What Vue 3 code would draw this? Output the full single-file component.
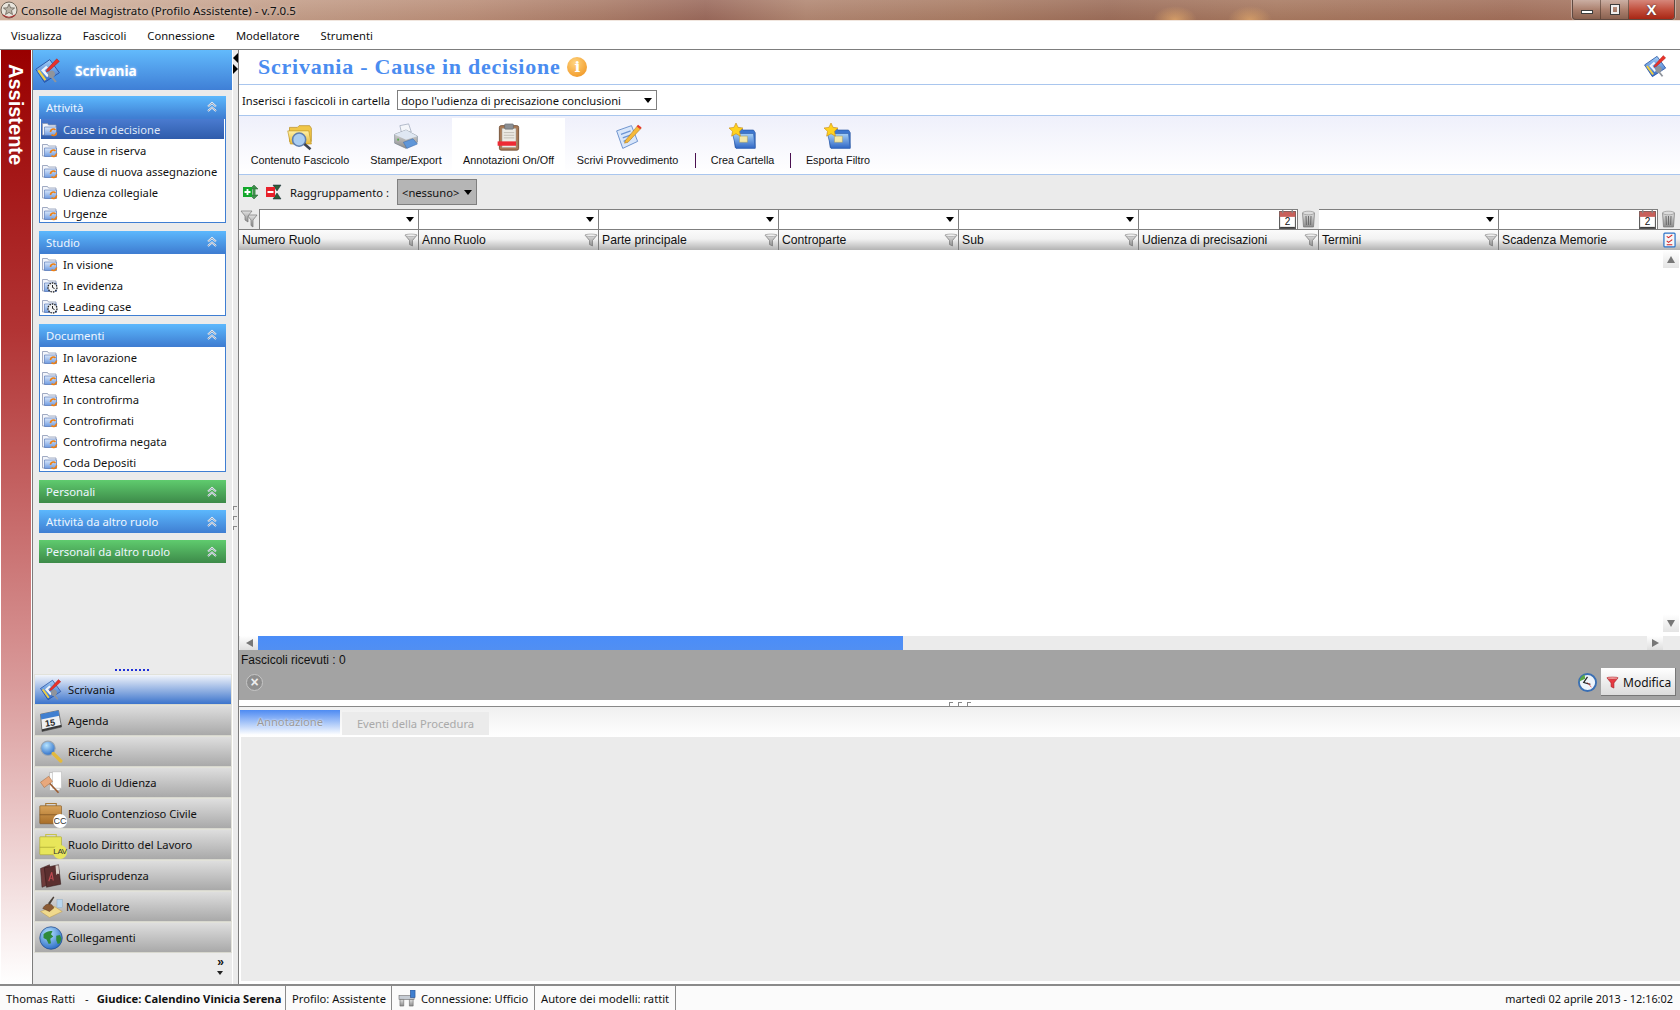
<template>
  <div class="app">
    <!-- icon sprite -->
    <svg class="sprite" width="0" height="0">
      <defs>
        <linearGradient id="g-blue" x1="0" y1="0" x2="0" y2="1"><stop offset="0" stop-color="#a5d0f7" /><stop offset="1" stop-color="#2f66c4" /></linearGradient>
        <linearGradient id="g-pale" x1="0" y1="0" x2="0" y2="1"><stop offset="0" stop-color="#dbe8fa" /><stop offset="1" stop-color="#6f9be0" /></linearGradient>
        <linearGradient id="g-yellow" x1="0" y1="0" x2="0" y2="1"><stop offset="0" stop-color="#fff2a8" /><stop offset="1" stop-color="#e8b838" /></linearGradient>
        <linearGradient id="g-brown" x1="0" y1="0" x2="0" y2="1"><stop offset="0" stop-color="#d9a35a" /><stop offset="1" stop-color="#a86e28" /></linearGradient>
        <linearGradient id="g-gray" x1="0" y1="0" x2="0" y2="1"><stop offset="0" stop-color="#e2e2e2" /><stop offset="1" stop-color="#8b8b8b" /></linearGradient>
        <radialGradient id="g-globe" cx="0.4" cy="0.3" r="0.8"><stop offset="0" stop-color="#b7e4ff" /><stop offset="1" stop-color="#1c5fc0" /></radialGradient>
      </defs>
      <symbol id="i-desk" viewBox="0 0 32 32">
        <path d="M2 14 18 3l11 15-17 11z" fill="url(#g-blue)" stroke="#254fa0" />
        <path d="M4 16 12 27l2-1.400L6 14.600z" fill="#f2d040" />
        <path d="M14 10 8 15l7 8 2-2-5-6 4-3z" fill="#eef4fc" />
        <path d="M16 20a4 4 0 1 1 6 3l4 5-2 1-4-5a4 4 0 0 1-4-4z" fill="#8f949c" />
        <path d="M15 14 26 2l3 3-12 11-3 1z" fill="#e8322a" stroke="#a01810" stroke-width=".5" />
      </symbol>
      <symbol id="i-fold" viewBox="0 0 16 16">
        <path d="M.5 2.500h5l1 1.500h7.500v10H.5z" fill="#f2f5fb" stroke="#8a97b4" stroke-width=".8" />
        <path d="M2.500 6h12v8.500h-12z" fill="url(#g-pale)" stroke="#4a6db0" stroke-width=".6" />
        <path d="M8.500 11a3 3 0 0 1 5-2.200M14.500 11.500a3 3 0 0 1-5 2.200" fill="none" stroke="#ee7f12" stroke-width="1.700" />
      </symbol>
      <symbol id="i-foldc" viewBox="0 0 16 16">
        <path d="M.5 2.500h5l1 1.500h7.500v10H.5z" fill="#f2f5fb" stroke="#8a97b4" stroke-width=".8" />
        <path d="M2.500 6h12v8.500h-12z" fill="url(#g-pale)" stroke="#4a6db0" stroke-width=".6" />
        <circle cx="10.500" cy="10.500" r="4.500" fill="#f4f4f4" stroke="#222" stroke-width="1.300" stroke-dasharray="1.500 1" />
        <path d="M10.500 8v2.500l2 1" stroke="#222" fill="none" />
      </symbol>
      <symbol id="i-chev" viewBox="0 0 12 12">
        <path d="M2 5.500 6 2l4 3.500M2 10 6 6.500 10 10" fill="none" stroke="#fff" stroke-width="1.700" />
        <path d="M2 5.500 6 2l4 3.500M2 10 6 6.500 10 10" fill="none" stroke="#28426e" stroke-width=".5" />
      </symbol>
      <symbol id="i-fsearch" viewBox="0 0 32 32">
        <path d="M4 5h9l2-2h12l2 3v15H4z" fill="#f0c648" stroke="#b98c20" stroke-width=".8" />
        <path d="M2 9h24l3 15H5z" fill="url(#g-yellow)" stroke="#c29a2a" stroke-width=".8" />
        <circle cx="15" cy="19" r="7.500" fill="#a9cdf2" stroke="#5f7fae" stroke-width="1.800" />
        <path d="m21 24 7 6" stroke="#3d4450" stroke-width="3" />
      </symbol>
      <symbol id="i-printer" viewBox="0 0 32 32">
        <path d="M9 3 19 1l3 9-11 2z" fill="#f4f6fa" stroke="#8d99ac" stroke-width=".7" />
        <path d="M3 13 16 8l13 7v7l-13 7-13-6z" fill="url(#g-gray)" stroke="#73808f" stroke-width=".7" />
        <path d="M3 13l13 6 13-4-13-7z" fill="#dfe7f2" />
        <path d="M13 22l11-4 5 6-12 5z" fill="#5f96d8" stroke="#3e6aa8" stroke-width=".6" />
        <circle cx="7" cy="19" r="1.200" fill="#5aa850" />
      </symbol>
      <symbol id="i-clip" viewBox="0 0 32 32">
        <rect x="5" y="3" width="22" height="28" rx="2" fill="#a97a56" stroke="#6f4c32" />
        <rect x="8" y="6" width="16" height="22" fill="#eceae4" stroke="#a09a90" stroke-width=".6" />
        <rect x="11" y="1" width="10" height="6" rx="1" fill="#8b8f94" stroke="#5e6266" stroke-width=".6" />
        <path d="M10 11h12M10 14h12M10 17h12" stroke="#bbb7ae" />
        <rect x="3" y="21" width="21" height="5" fill="#ee2a34" />
      </symbol>
      <symbol id="i-write" viewBox="0 0 32 32">
        <path d="M3 9 20 3l7 18-17 8z" fill="#d8e6fa" stroke="#5f88c8" />
        <path d="M8 13l11-4M10 17l11-4M11 21l9-4" stroke="#6b94d2" stroke-width="1.300" />
        <path d="M13 20 27 3l4 3-15 16-4 1z" fill="#f6b93a" stroke="#a87418" stroke-width=".6" />
        <path d="m26 4 1.500-2 4 3-1.500 2z" fill="#e63a2e" />
      </symbol>
      <symbol id="i-fstar" viewBox="0 0 32 32">
        <path d="M5 6h9l2 2h12l2 3v17H7z" fill="#3c76cf" stroke="#234f9a" stroke-width=".7" />
        <path d="M4 12h24l2 17H8z" fill="url(#g-blue)" stroke="#2d5cab" stroke-width=".7" />
        <path d="M12 15h9v7h-9z" fill="#f4e8a6" stroke="#a89a50" stroke-width=".5" />
        <path d="m8 0 2.400 5 5.600.700-4 3.800 1 5.500L8 12.300 3 15l1-5.500-4-3.800 5.600-.700z" fill="#ffd21f" stroke="#c98a10" stroke-width=".7" />
      </symbol>
      <symbol id="i-gplus" viewBox="0 0 16 16">
        <path d="M11 1 7 5h8zM11 15l-4-4h8z" fill="#3f8f4c" stroke="#1f5a2a" stroke-width=".5" />
        <path d="M9.500 5h3v6h-3z" fill="#3f8f4c" />
        <rect x="0" y="3" width="9" height="10" fill="#12a82a" />
        <path d="M4.500 5v6M1.500 8h6" stroke="#fff" stroke-width="1.800" />
      </symbol>
      <symbol id="i-gminus" viewBox="0 0 16 16">
        <path d="M7 1h8l-4 6zM7 15h8l-4-6z" fill="#2f5f3a" stroke="#123" stroke-width=".5" />
        <rect x="0" y="3" width="9" height="10" fill="#e8202a" />
        <path d="M1.500 8h6" stroke="#fff" stroke-width="2" />
      </symbol>
      <symbol id="i-funnel" viewBox="0 0 14 14">
        <path d="M1 2h12L8.500 7.500V13l-3-1.500v-4z" fill="url(#g-gray)" stroke="#777" stroke-width=".7" />
        <ellipse cx="7" cy="2.300" rx="5.800" ry="1.300" fill="#eee" stroke="#888" stroke-width=".5" />
      </symbol>
      <symbol id="i-funnels" viewBox="0 0 18 18">
        <path d="M7 5h10l-4 5v7l-2-1.500V10z" fill="url(#g-gray)" stroke="#777" stroke-width=".7" />
        <path d="M1 1h11L8 6v6L5 10V6z" fill="url(#g-gray)" stroke="#777" stroke-width=".7" />
      </symbol>
      <symbol id="i-redf" viewBox="0 0 14 14">
        <path d="M1 2h12L8.500 7.500V13l-3-1.500v-4z" fill="#e83a42" stroke="#a51c22" stroke-width=".7" />
        <ellipse cx="7" cy="2.300" rx="5.800" ry="1.300" fill="#f6a0a0" stroke="#a51c22" stroke-width=".5" />
      </symbol>
      <symbol id="i-cal" viewBox="0 0 16 18">
        <rect x=".5" y="1.500" width="15" height="16" fill="#fff" stroke="#555" />
        <rect x=".5" y="1.500" width="15" height="5" fill="#c8605a" />
        <path d="M3.500 0v3M12.500 0v3" stroke="#888" stroke-width="1.200" />
        <path d="M1 16.500h14" stroke="#333" />
      </symbol>
      <symbol id="i-trash" viewBox="0 0 14 18">
        <path d="M1 3h12l-1 14H2z" fill="url(#g-gray)" stroke="#777" stroke-width=".7" />
        <ellipse cx="7" cy="3" rx="6" ry="1.800" fill="#ddd" stroke="#888" stroke-width=".6" />
        <path d="M4.500 6l.4 9M7 6v9M9.500 6l-.4 9" stroke="#6b6b6b" />
      </symbol>
      <symbol id="i-toggle" viewBox="0 0 14 16">
        <rect x="1" y=".5" width="12" height="15" rx="1" fill="#f6f6f6" stroke="#2a72c8" stroke-width="1.300" />
        <path d="m4 4 2 1.500L10 2.500M4 9l2 1.500 4-3M4 13h6" fill="none" stroke="#d42020" stroke-width="1.100" />
      </symbol>
      <symbol id="i-agenda" viewBox="0 0 32 32">
        <path d="M2 7 26 2l4 22-26 6z" fill="#eef0f2" stroke="#555" />
        <path d="M2 7 26 2l1 7L3 14z" fill="#3f7fd0" />
        <path d="m4 27 26-6v3L4 30z" fill="#3a3a3a" />
      </symbol>
      <symbol id="i-lens" viewBox="0 0 32 32">
        <circle cx="12" cy="11" r="9.500" fill="url(#g-globe)" stroke="#9aa6b2" stroke-width="1.500" />
        <path d="m19 18 10 10" stroke="#e3b93c" stroke-width="4.500" stroke-linecap="round" />
      </symbol>
      <symbol id="i-gavel" viewBox="0 0 32 32">
        <path d="M14 2h14v24H14z" fill="#f8f8f8" stroke="#aaa" stroke-width=".8" />
        <path d="M18 1h12v22H18z" fill="#fff" stroke="#bbb" stroke-width=".8" />
        <path d="m12 14 14 15" stroke="#9a5a2e" stroke-width="2.200" />
        <path d="m2 15 11-8 5 7-11 8z" fill="#e8a87c" stroke="#a46a3c" stroke-width=".7" />
      </symbol>
      <symbol id="i-brief" viewBox="0 0 32 32">
        <path d="M9 6V2h14v4" fill="none" stroke="#a87a38" stroke-width="1.500" />
        <rect x="1" y="5" width="29" height="24" rx="1" fill="url(#g-brown)" stroke="#7a5220" stroke-width=".8" />
        <path d="M1 17h29" stroke="#7a5220" />
      </symbol>
      <symbol id="i-briefy" viewBox="0 0 32 32">
        <path d="M9 6V2h14v4" fill="none" stroke="#c7c24a" stroke-width="1.500" />
        <rect x="1" y="5" width="29" height="24" rx="1" fill="#e8e65a" stroke="#a8a530" stroke-width=".8" />
        <path d="M1 19h29" stroke="#a8a530" />
      </symbol>
      <symbol id="i-book" viewBox="0 0 32 32">
        <path d="M2 6 14 1v26L4 31z" fill="#6e3b3b" stroke="#3a1e1e" stroke-width=".7" />
        <path d="M7 5 26 1l3 26-19 4z" fill="#5b2f2f" stroke="#2e1717" stroke-width=".7" />
        <path d="m22 2 4-.5 1 12-2-1-2 2z" fill="#d8d0c8" />
        <path d="m13 23 4-12 2 11M14 19h5" fill="none" stroke="#bb4a50" stroke-width="1.600" />
      </symbol>
      <symbol id="i-model" viewBox="0 0 32 32">
        <path d="M2 22 20 15l11 7-17 8z" fill="#f0d98c" stroke="#b89a50" stroke-width=".7" />
        <path d="M5 18c3-6 8-7 12-5l3 4-6 5z" fill="#8a5a34" stroke="#50301a" stroke-width=".6" />
        <path d="m12 11 7-9 1.500 1-6 10z" fill="#4a4038" />
        <rect x="24" y="6" width="7" height="11" fill="#b7d5ee" stroke="#8aa8c4" stroke-width=".6" />
      </symbol>
      <symbol id="i-globe" viewBox="0 0 32 32">
        <circle cx="16" cy="16" r="15" fill="url(#g-globe)" stroke="#264d8c" />
        <path d="M6 11c4-4 9-5 12-4l-2 4 3 3-4 3 1 6-3 1-3-6-4-2zM23 13l5-1 2 5-2 6-3 1-2-5z" fill="#2f8a3a" />
      </symbol>
      <symbol id="i-clock" viewBox="0 0 20 20">
        <circle cx="10" cy="10" r="9" fill="#eef4fb" stroke="#3a6fb4" stroke-width="2" />
        <path d="M10 4 6 10l7 2" fill="none" stroke="#222" stroke-width="1.300" />
        <path d="m10 10 4 5" stroke="#d44" stroke-width=".8" />
        <path d="M1.500 9A9 9 0 0 1 7 1.500L7.500 6z" fill="#58a845" />
      </symbol>
      <symbol id="i-net" viewBox="0 0 20 18">
        <rect x="1" y="6" width="16" height="4" fill="#c6ccd4" stroke="#666" stroke-width=".6" />
        <path d="M2 10h4v7H2zM12 10h4v7h-4z" fill="url(#g-gray)" stroke="#666" stroke-width=".6" />
        <rect x="13" y="0" width="5" height="8" fill="#3f7fd0" stroke="#264d8c" stroke-width=".6" />
      </symbol>
      <symbol id="i-emblem" viewBox="0 0 18 18">
        <circle cx="9" cy="9" r="8" fill="#e8e4dc" stroke="#6f6458" />
        <path d="m9 3 1.600 3.800 4 .2-3.100 2.600 1 4L9 11.400l-3.500 2.200 1-4L3.400 7l4-.2z" fill="#b9b2a6" stroke="#4e463c" stroke-width=".6" />
        <path d="M3 14c3 3 9 3 12 0" fill="none" stroke="#a33" stroke-width="1.200" />
      </symbol>
    </svg>

    <!-- window title -->
    <header class="titlebar">
      <svg class="emblem"><use href="#i-emblem" /></svg>
      <span class="title-text">Consolle del Magistrato (Profilo Assistente) - v.7.0.5</span>
      <div class="win-btns">
        <span class="win-btn"><i class="min-glyph"></i></span>
        <span class="win-btn"><i class="max-glyph"></i></span>
        <span class="win-btn win-close">X</span>
      </div>
    </header>

    <nav class="menubar">
      <span v-for="m in menus" :key="m" class="menu-item">{{ m }}</span>
    </nav>

    <div class="workspace">
      <div class="role-strip"><span>Assistente</span></div>

      <aside class="sidebar">
        <div class="side-head">
          <svg class="side-head-ico"><use href="#i-desk" /></svg>
          <span>Scrivania</span>
        </div>

        <div class="groups">
          <section v-for="g in groups" :key="g.title" class="group" :class="{ closed: !g.items.length, green: g.green }">
            <div class="group-head">
              <span>{{ g.title }}</span>
              <svg class="chev"><use href="#i-chev" /></svg>
            </div>
            <ul v-if="g.items.length" class="group-list">
              <li v-for="it in g.items" :key="it.label" class="group-row" :class="{ selected: it.selected }">
                <svg class="row-ico"><use :href="it.clock ? '#i-foldc' : '#i-fold'" /></svg>
                <span>{{ it.label }}</span>
              </li>
            </ul>
          </section>
        </div>

        <div class="side-dots"></div>
        <div class="nav-btns">
          <div v-for="n in navs" :key="n.label" class="nav-btn" :class="{ active: n.active }">
            <span class="nav-ico">
              <svg><use :href="'#' + n.icon" /></svg>
              <b v-if="n.badge" class="nav-badge" :class="{ yellow: n.icon === 'i-briefy' }">{{ n.badge }}</b>
              <b v-if="n.day" class="nav-day">{{ n.day }}</b>
            </span>
            <span class="nav-label" :class="{ tight: n.tight }">{{ n.label }}</span>
          </div>
        </div>
        <div class="side-more">»<i></i></div>
      </aside>

      <div class="gutter">
        <i class="arrow-l"></i>
        <i class="arrow-r"></i>
        <div class="gutter-grip"><i></i><i></i><i></i></div>
      </div>

      <main class="main">
        <div class="page-head">
          <h1>Scrivania - Cause in decisione</h1>
          <span class="info-dot">i</span>
          <svg class="page-head-ico"><use href="#i-desk" /></svg>
        </div>

        <div class="folder-row">
          <span>Inserisci i fascicoli in cartella</span>
          <div class="fake-select">
            <span>dopo l'udienza di precisazione conclusioni</span>
            <i class="caret"></i>
          </div>
        </div>

        <div class="toolbar">
          <template v-for="t in tools" :key="t.label">
            <i v-if="t.sep" class="tool-sep" :style="{ marginLeft: t.sep + 'px' }"></i>
            <div class="tool" :class="{ on: t.on }" :style="{ width: t.w + 'px' }">
              <svg class="tool-ico"><use :href="'#' + t.icon" /></svg>
              <span>{{ t.label }}</span>
            </div>
          </template>
        </div>

        <div class="group-row-bar">
          <svg class="grp-ico"><use href="#i-gplus" /></svg>
          <svg class="grp-ico"><use href="#i-gminus" /></svg>
          <span class="grp-label">Raggruppamento :</span>
          <div class="grp-select">
            <span>&lt;nessuno&gt;</span>
            <i class="caret"></i>
          </div>
        </div>

        <div class="filter-row">
          <span class="filter-start"><svg><use href="#i-funnels" /></svg></span>
          <div v-for="c in columns" :key="c.label" class="filter-cell" :class="{ date: c.date }">
            <template v-if="c.date">
              <div class="date-box">
                <span class="cal"><svg><use href="#i-cal" /></svg><b>2</b></span>
              </div>
              <span class="trash"><svg><use href="#i-trash" /></svg></span>
            </template>
            <i v-else class="caret"></i>
          </div>
        </div>

        <div class="col-head">
          <div v-for="c in columns" :key="c.label" class="col">
            <span>{{ c.label }}</span>
            <svg v-if="!c.last" class="col-funnel"><use href="#i-funnel" /></svg>
            <svg v-else class="col-toggle"><use href="#i-toggle" /></svg>
          </div>
        </div>

        <div class="table-body">
          <div class="vscroll">
            <span class="sb-btn"><i class="tri-up"></i></span>
            <span class="sb-btn"><i class="tri-down"></i></span>
          </div>
        </div>

        <div class="hscroll">
          <span class="hs-btn"><i class="tri-left"></i></span>
          <div class="hs-thumb"></div>
          <span class="hs-btn hs-right"><i class="tri-right"></i></span>
        </div>

        <div class="status-panel">
          <div class="received">Fascicoli ricevuti : 0</div>
          <div class="panel-actions">
            <span class="close-dot">×</span>
            <svg class="clock"><use href="#i-clock" /></svg>
            <button class="modifica" type="button">
              <svg><use href="#i-redf" /></svg>
              Modifica
            </button>
          </div>
        </div>

        <div class="split"><i></i><i></i><i></i></div>

        <div class="tabs">
          <span class="tab active">Annotazione</span>
          <span class="tab">Eventi della Procedura</span>
        </div>
        <div class="tab-content"></div>
      </main>
    </div>

    <footer class="statusbar">
      <span class="st st-user">Thomas Ratti<em>-</em><b>Giudice: Calendino Vinicia Serena</b></span>
      <span class="st st-prof">Profilo: Assistente</span>
      <span class="st st-conn"><svg><use href="#i-net" /></svg>Connessione: Ufficio</span>
      <span class="st st-auth">Autore dei modelli: rattit</span>
      <span class="st-date">martedì 02 aprile 2013 - 12:16:02</span>
    </footer>
  </div>
</template>

<script setup>
const menus = ['Visualizza', 'Fascicoli', 'Connessione', 'Modellatore', 'Strumenti']

const groups = [
  {
    title: 'Attività',
    items: [
      { label: 'Cause in decisione', selected: true },
      { label: 'Cause in riserva' },
      { label: 'Cause di nuova assegnazione' },
      { label: 'Udienza collegiale' },
      { label: 'Urgenze' },
    ],
  },
  {
    title: 'Studio',
    items: [
      { label: 'In visione' },
      { label: 'In evidenza', clock: true },
      { label: 'Leading case', clock: true },
    ],
  },
  {
    title: 'Documenti',
    items: [
      { label: 'In lavorazione' },
      { label: 'Attesa cancelleria' },
      { label: 'In controfirma' },
      { label: 'Controfirmati' },
      { label: 'Controfirma negata' },
      { label: 'Coda Depositi' },
    ],
  },
  { title: 'Personali', green: true, items: [] },
  { title: 'Attività da altro ruolo', items: [] },
  { title: 'Personali da altro ruolo', green: true, items: [] },
]

const navs = [
  { label: 'Scrivania', icon: 'i-desk', active: true },
  { label: 'Agenda', icon: 'i-agenda', day: '15' },
  { label: 'Ricerche', icon: 'i-lens' },
  { label: 'Ruolo di Udienza', icon: 'i-gavel' },
  { label: 'Ruolo Contenzioso Civile', icon: 'i-brief', badge: 'CC' },
  { label: 'Ruolo Diritto del Lavoro', icon: 'i-briefy', badge: 'LAV' },
  { label: 'Giurisprudenza', icon: 'i-book' },
  { label: 'Modellatore', icon: 'i-model', tight: true },
  { label: 'Collegamenti', icon: 'i-globe', tight: true },
]

const tools = [
  { label: 'Contenuto Fascicolo', icon: 'i-fsearch', w: 120 },
  { label: 'Stampe/Export', icon: 'i-printer', w: 92 },
  { label: 'Annotazioni On/Off', icon: 'i-clip', w: 113, on: true },
  { label: 'Scrivi Provvedimento', icon: 'i-write', w: 125 },
  { label: 'Crea Cartella', icon: 'i-fstar', w: 93, sep: 5 },
  { label: 'Esporta Filtro', icon: 'i-fstar', w: 94, sep: 1 },
]

const columns = [
  { label: 'Numero Ruolo' },
  { label: 'Anno Ruolo' },
  { label: 'Parte principale' },
  { label: 'Controparte' },
  { label: 'Sub' },
  { label: 'Udienza di precisazioni', date: true },
  { label: 'Termini' },
  { label: 'Scadenza Memorie', date: true, last: true },
]
</script>

<style>
html,
body {
  margin: 0;
  overflow: hidden;
}
</style>

<style scoped>
.app {
  width: 1680px;
  height: 1010px;
  display: flex;
  flex-direction: column;
  background: #fff;
  color: #111;
  font-family: "Noto Sans", sans-serif;
  font-size: 11.2px;
  white-space: nowrap;
  overflow: hidden;
}

.sprite {
  position: absolute;
}

i {
  font-style: normal;
}

/* title bar */
.titlebar {
  height: 21px;
  flex: none;
  display: flex;
  align-items: center;
  position: relative;
  box-sizing: border-box;
  border-bottom: 1px solid #f1e6de;
  background:
    radial-gradient(ellipse 22px 14px at 1175px 20px, rgba(240, 180, 110, 0.65), transparent),
    radial-gradient(ellipse 22px 14px at 1250px 20px, rgba(240, 180, 110, 0.6), transparent),
    linear-gradient(180deg, rgba(255, 255, 255, 0.12), rgba(0, 0, 0, 0.02)),
    linear-gradient(90deg, #d4b6a2 0, #c49f8a 15%, #b98c76 28%, #a97a66 36%, #99685a 42%, #b08570 48%, #a87a62 58%, #9b6c58 66%, #a7785f 76%, #a06d58 90%, #a77864 100%);
}

.emblem {
  width: 18px;
  height: 18px;
}

.title-text {
  margin-left: 3px;
  font-size: 11.500px;
  color: #111;
  text-shadow: 0 0 4px rgba(255, 255, 255, 0.6);
}

.win-btns {
  position: absolute;
  right: 5px;
  top: 0;
  height: 19px;
  display: flex;
  border: 1px solid #5f4a42;
  border-top: 0;
  border-radius: 0 0 4px 4px;
  overflow: hidden;
  box-shadow: 0 0 0 1px rgba(255, 255, 255, 0.35);
}

.win-btn {
  width: 27px;
  display: flex;
  align-items: center;
  justify-content: center;
  border-right: 1px solid rgba(60, 40, 30, 0.5);
  background: linear-gradient(180deg, rgba(255, 255, 255, 0.35), rgba(255, 255, 255, 0.05) 50%, rgba(0, 0, 0, 0.15));
}

.min-glyph {
  width: 10px;
  height: 2px;
  margin-top: 5px;
  background: #fff;
  border: 1px solid #3d3d3d;
}

.max-glyph {
  width: 4px;
  height: 5px;
  border: 2px solid #eee;
  outline: 1px solid #3d3d3d;
}

.win-close {
  width: 45px;
  border-right: 0;
  background: linear-gradient(180deg, #d6877b, #c2503e 50%, #a82614);
  color: #fff;
  font-family: "Liberation Sans", sans-serif;
  font-size: 15px;
  font-weight: 700;
  text-shadow: 0 0 2px #333;
}

/* menu */
.menubar {
  height: 29px;
  flex: none;
  box-sizing: border-box;
  border-bottom: 1px solid #7d7d7d;
  display: flex;
  align-items: center;
  padding-left: 11px;
  gap: 21px;
}

.workspace {
  flex: 1;
  display: flex;
  min-height: 0;
}

/* left red strip */
.role-strip {
  width: 30px;
  margin-left: 1px;
  flex: none;
  background: linear-gradient(180deg, #990000 0, #b23434 30%, #d99a9a 68%, #fff 100%);
  border-right: 1px solid #fff;
  padding-top: 14px;
}

.role-strip span {
  display: block;
  writing-mode: vertical-rl;
  font-family: "Liberation Sans", sans-serif;
  font-size: 20px;
  font-weight: 700;
  color: #fff;
  margin-left: 4px;
  line-height: 22px;
}

/* sidebar */
.sidebar {
  width: 199px;
  flex: none;
  display: flex;
  flex-direction: column;
  border-left: 1px solid #7d7d7d;
  background: #ebebeb;
}

.side-head {
  height: 40px;
  flex: none;
  display: flex;
  align-items: center;
  padding-top: 1px;
  box-sizing: border-box;
  background: linear-gradient(180deg, #62bafc, #3f7fd6);
  color: #fff;
  font-size: 13.600px;
  font-weight: 700;
  text-shadow: 0 0 3px #bcdcff;
}

.side-head-ico {
  width: 28px;
  height: 28px;
  margin: 0 13px 0 1px;
}

.groups {
  padding: 6px 6px 0;
  flex: 1;
}

.group {
  margin-bottom: 8px;
}

.group.closed {
  margin-bottom: 7px;
}

.group-head {
  height: 22px;
  display: flex;
  align-items: center;
  justify-content: space-between;
  padding: 0 8px 0 7px;
  background: linear-gradient(180deg, #5cb8fd, #3f7ed2);
  color: #eef6ff;
  font-size: 11.300px;
}

.closed .group-head {
  height: 23px;
}

.green .group-head {
  background: linear-gradient(180deg, #5fcb6e, #3d8a49);
}

.chev {
  width: 12px;
  height: 12px;
}

.group-list {
  list-style: none;
  margin: 0;
  padding: 0;
  background: #fff;
  box-shadow: inset 0 0 0 1px #3f7ed2;
}

.group-row {
  height: 21px;
  display: flex;
  align-items: center;
  padding: 1px 2px 0 3px;
  box-sizing: border-box;
}

.group-row.selected {
  height: 20px;
  margin: 0 2px 1px;
  padding: 0 0 0 1px;
  background: linear-gradient(180deg, #4a7bd0, #2f5cab);
  color: #dfe8f7;
  position: relative;
  top: 1px;
}

.row-ico {
  width: 16px;
  height: 16px;
  margin-right: 5px;
  flex: none;
}

.side-dots {
  flex: none;
  height: 0;
  width: 34px;
  margin: 0 0 3px 82px;
  border-top: 2px dotted #2030d8;
}

.nav-btns {
  flex: none;
  margin-left: 1px;
  width: 198px;
}

.nav-btn {
  height: 31px;
  box-sizing: border-box;
  display: flex;
  align-items: center;
  border: 1px solid #e2e2da;
  border-bottom: 1px solid #d8d8cf;
  background: linear-gradient(180deg, #dedede, #a9a9a9);
}

.nav-btn.active {
  background: linear-gradient(180deg, #f2f5fb, #3c74cc);
}

.nav-ico {
  width: 24px;
  height: 24px;
  margin: 0 5px 0 4px;
  position: relative;
  flex: none;
}

.nav-ico svg {
  width: 24px;
  height: 24px;
  display: block;
}

.nav-badge {
  position: absolute;
  right: -4px;
  bottom: -2px;
  width: 14px;
  height: 14px;
  border-radius: 50%;
  background: #fff;
  font: 9px/14px "Liberation Sans", sans-serif;
  color: #333;
  text-align: center;
}

.nav-badge.yellow {
  background: #e8e65a;
  font-size: 8px;
  letter-spacing: -0.4px;
}

.nav-day {
  position: absolute;
  left: 6px;
  top: 9px;
  font: 700 9px/10px "Liberation Sans", sans-serif;
  color: #222;
  transform: rotate(-8deg);
}

.nav-label.tight {
  margin-left: -2px;
}

.side-more {
  flex: none;
  height: 31px;
  text-align: right;
  padding-right: 8px;
  font: 700 12px/18px "Liberation Sans", sans-serif;
  position: relative;
}

.side-more i {
  position: absolute;
  right: 9px;
  top: 18px;
  border: 3px solid transparent;
  border-top: 4px solid #222;
}

/* gutter */
.gutter {
  width: 6px;
  flex: none;
  background: #ebebeb;
  border-left: 1px solid #fff;
  box-sizing: border-box;
  position: relative;
}

.arrow-l,
.arrow-r {
  position: absolute;
  border: 5px solid transparent;
}

.arrow-l {
  top: 3px;
  left: -5px;
  border-right: 5px solid #000;
}

.arrow-r {
  top: 14px;
  left: 0;
  border-left: 5px solid #000;
}

.gutter-grip {
  position: absolute;
  top: 456px;
  left: 0;
  display: flex;
  flex-direction: column;
  gap: 6px;
}

.gutter-grip i {
  width: 3px;
  height: 3px;
  border-top: 1px solid #888;
  border-left: 1px solid #888;
}

/* main */
.main {
  flex: 1;
  min-width: 0;
  display: flex;
  flex-direction: column;
  border-left: 1px solid #7d7d7d;
  position: relative;
}

.page-head {
  height: 35px;
  flex: none;
  display: flex;
  align-items: center;
  padding-left: 19px;
  padding-bottom: 1px;
  box-sizing: border-box;
  border-bottom: 1px solid #a9c6ee;
}

.page-head h1 {
  margin: 0;
  font-family: "Liberation Serif", serif;
  font-size: 22px;
  letter-spacing: 0.75px;
  font-weight: 700;
  color: #4a8cf0;
}

.info-dot {
  width: 20px;
  height: 20px;
  margin-left: 7px;
  border-radius: 50%;
  background: radial-gradient(circle at 40% 30%, #ffd580, #ee8c14);
  color: #fff;
  font: 700 15px/20px "DejaVu Serif", serif;
  text-align: center;
}

.page-head-ico {
  width: 25px;
  height: 25px;
  margin: 0 12px 0 auto;
}

.folder-row {
  height: 31px;
  box-sizing: border-box;
  flex: none;
  display: flex;
  align-items: center;
  padding-left: 3px;
  gap: 7px;
  border-bottom: 1px solid #a9c6ee;
}

.fake-select {
  width: 260px;
  height: 20px;
  box-sizing: border-box;
  border: 1px solid #7f7f7f;
  display: flex;
  align-items: center;
  justify-content: space-between;
  padding: 0 4px 0 3px;
  background: #fff;
}

.caret {
  width: 0;
  height: 0;
  border: 4px solid transparent;
  border-top: 5px solid #000;
  border-bottom: 0;
  flex: none;
}

.toolbar {
  height: 59px;
  box-sizing: border-box;
  flex: none;
  display: flex;
  align-items: stretch;
  padding-left: 1px;
  background: linear-gradient(180deg, #eff0fb, #fff);
  border-bottom: 1px solid #a9c6ee;
  font-family: "Liberation Sans", sans-serif;
  font-size: 10.800px;
}

.tool {
  flex: none;
  display: flex;
  flex-direction: column;
  align-items: center;
  padding-top: 7px;
  box-sizing: border-box;
}

.tool.on {
  background: #fff;
  margin-top: 2px;
  padding-top: 5px;
}

.tool-ico {
  width: 28px;
  height: 28px;
  margin-bottom: 3px;
}

.tool-sep {
  width: 1px;
  height: 15px;
  background: #4a1050;
  margin-top: 37px;
  flex: none;
}

.group-row-bar {
  height: 34px;
  flex: none;
  display: flex;
  align-items: center;
  background: #ebebeb;
  padding-left: 4px;
}

.grp-ico {
  width: 16px;
  height: 16px;
  margin-right: 7px;
}

.grp-label {
  margin-left: 1px;
  width: 107px;
}

.grp-select {
  width: 80px;
  height: 26px;
  box-sizing: border-box;
  border: 1px solid #7f7f7f;
  background: #b5b5b5;
  display: flex;
  align-items: center;
  justify-content: space-between;
  padding: 0 4px;
}

.filter-row {
  height: 20px;
  flex: none;
  display: flex;
  background: #ebebeb;
}

.filter-start {
  width: 20px;
  flex: none;
  display: flex;
  align-items: center;
  padding-left: 1px;
  box-sizing: border-box;
}

.filter-start svg {
  width: 18px;
  height: 18px;
}

.filter-cell {
  width: 180px;
  flex: none;
  box-sizing: border-box;
  background: #fff;
  border: 1px solid #7f7f7f;
  border-width: 1px 1px 0 0;
  display: flex;
  align-items: center;
  justify-content: flex-end;
  padding-right: 4px;
}

.filter-cell:nth-child(2) {
  width: 160px;
  border-left: 1px solid #7f7f7f;
}

.filter-cell.date {
  background: transparent;
  border: 0;
  padding: 0;
}

.date-box {
  flex: 1;
  height: 20px;
  box-sizing: border-box;
  background: #fff;
  border: 1px solid #7f7f7f;
  border-width: 1px 1px 0 0;
  display: flex;
  justify-content: flex-end;
  padding-right: 1px;
}

.cal {
  width: 17px;
  height: 19px;
  position: relative;
  display: block;
}

.cal svg {
  width: 17px;
  height: 19px;
  display: block;
}

.cal b {
  position: absolute;
  left: 0;
  right: 0;
  bottom: 2px;
  text-align: center;
  font: 10px/10px "Liberation Sans", sans-serif;
}

.trash {
  width: 21px;
  flex: none;
  display: flex;
  align-items: center;
  justify-content: center;
}

.trash svg {
  width: 15px;
  height: 18px;
}

.col-head {
  height: 21px;
  flex: none;
  display: flex;
  background: linear-gradient(180deg, #fbfbfb 0, #f2f2f2 45%, #b3b3b3 100%);
  border-top: 1px solid #7f7f7f;
  box-sizing: border-box;
  font-family: "Liberation Sans", sans-serif;
  font-size: 12.200px;
}

.col {
  width: 180px;
  flex: none;
  box-sizing: border-box;
  display: flex;
  align-items: center;
  justify-content: space-between;
  padding: 0 0 0 3px;
  border-right: 1px solid #7f7f7f;
}

.col:last-child {
  border-right: 0;
  padding-right: 3px;
}

.col-funnel {
  width: 14px;
  height: 14px;
}

.col-toggle {
  width: 13px;
  height: 16px;
}

.table-body {
  flex: 1;
  min-height: 0;
  background: #fff;
  display: flex;
  justify-content: flex-end;
}

.vscroll {
  width: 16px;
  margin-right: 1px;
  display: flex;
  flex-direction: column;
  justify-content: space-between;
  padding-bottom: 4px;
  box-sizing: border-box;
}

.sb-btn {
  height: 18px;
  display: flex;
  align-items: center;
  justify-content: center;
  background: linear-gradient(180deg, #fff, #e4e4e4);
}

.tri-up,
.tri-down,
.tri-left,
.tri-right {
  width: 0;
  height: 0;
  border: 4px solid transparent;
}

.tri-up {
  border-top: 0;
  border-bottom: 7px solid #777;
}

.tri-down {
  border-bottom: 0;
  border-top: 7px solid #777;
}

.tri-left {
  border-left: 0;
  border-right: 7px solid #777;
}

.tri-right {
  border-right: 0;
  border-left: 7px solid #777;
}

.hscroll {
  height: 14px;
  flex: none;
  display: flex;
  background: #ebebeb;
  padding-left: 1px;
}

.hs-btn {
  width: 18px;
  flex: none;
  display: flex;
  align-items: center;
  justify-content: center;
  background: linear-gradient(180deg, #fff, #dedede);
}

.hs-thumb {
  width: 645px;
  flex: none;
  background: linear-gradient(180deg, #4b8df8, #518ff2);
}

.hs-right {
  margin-left: auto;
  margin-right: 17px;
  width: 16px;
}

.status-panel {
  height: 50px;
  flex: none;
  background: #a3a3a3;
  display: flex;
  flex-direction: column;
  font-family: "Liberation Sans", sans-serif;
  font-size: 12px;
}

.received {
  padding: 3px 0 0 2px;
  height: 18px;
  box-sizing: border-box;
  line-height: 15px;
}

.panel-actions {
  flex: 1;
  display: flex;
  align-items: flex-start;
  padding-left: 7px;
}

.close-dot {
  width: 15px;
  height: 15px;
  margin-top: 6px;
  border-radius: 50%;
  background: #8e8e8e;
  border: 1px solid #c6c6c6;
  color: #eee;
  font: 700 14px/14px "Liberation Sans", sans-serif;
  text-align: center;
}

.clock {
  width: 19px;
  height: 19px;
  margin: 5px 4px 0 auto;
}

.modifica {
  width: 75px;
  height: 28px;
  margin: 0 4px 0 0;
  box-sizing: border-box;
  display: flex;
  align-items: center;
  gap: 4px;
  padding: 1px 0 0 5px;
  border: 0;
  border-right: 1px solid #777;
  border-bottom: 1px solid #777;
  background: linear-gradient(180deg, #fff, #dcdcdc);
  color: #111;
  font-family: "Noto Sans", sans-serif;
  font-size: 12px;
}

.modifica svg {
  width: 13px;
  height: 13px;
}

.split {
  height: 7px;
  box-sizing: border-box;
  flex: none;
  display: flex;
  justify-content: center;
  gap: 5px;
  border-bottom: 1px solid #888;
  background: #fff;
}

.split i {
  width: 3px;
  height: 3px;
  margin-top: 2px;
  border-top: 1px solid #888;
  border-left: 1px solid #888;
}

.tabs {
  height: 30px;
  flex: none;
  display: flex;
  align-items: flex-end;
  gap: 2px;
  padding: 0 0 2px 1px;
  box-sizing: border-box;
  background: linear-gradient(180deg, #f0f0f0, #fff);
}

.tab {
  height: 23px;
  width: 147px;
  background: #ebebeb;
  color: #a9a9a9;
  text-align: center;
  line-height: 23px;
}

.tab.active {
  height: 25px;
  width: 100px;
  line-height: 24px;
  background: linear-gradient(180deg, #4e8bf2, #fff);
  color: #999;
  text-shadow: 0 0 2px #fff;
}

.tab-content {
  height: 244px;
  flex: none;
  margin: 0 0 3px 2px;
  background: #ebebeb;
}

/* status bar */
.statusbar {
  height: 26px;
  flex: none;
  box-sizing: border-box;
  border-top: 2px solid #8a8a8a;
  background: #fbfbfb;
  display: flex;
  align-items: center;
  position: relative;
}

.st {
  height: 100%;
  display: flex;
  align-items: center;
  border-right: 1px solid #8a8a8a;
  box-sizing: border-box;
  padding: 0 5px 0 6px;
  flex: none;
}

.st-user {
  width: 286px;
}

.st-user em {
  font-style: normal;
  margin: 0 8px 0 10px;
}

.st-prof {
  width: 106px;
}

.st-conn {
  width: 143px;
}

.st-conn svg {
  width: 19px;
  height: 17px;
  margin-right: 4px;
}

.st-auth {
  width: 141px;
}

.st-date {
  margin-left: auto;
  margin-right: 7px;
  font-size: 10.900px;
}
</style>
